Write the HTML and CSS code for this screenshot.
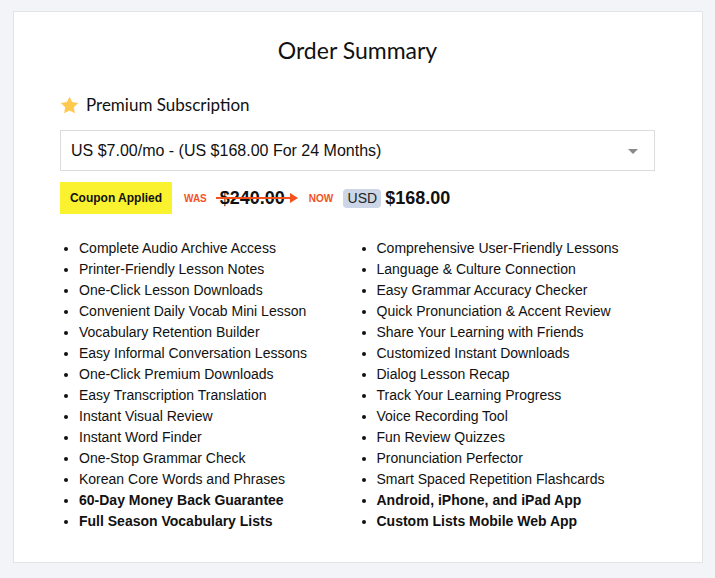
FILE: index.html
```html
<!DOCTYPE html>
<html>
<head>
<meta charset="utf-8">
<link rel="stylesheet" href="styles.css">
</head>
<body>
<div class="card">
  <h1 class="title">Order Summary</h1>
  <div class="plan">
    <svg class="star" width="19" height="18" viewBox="0 0 24 23"><path d="M12 0.8l3.4 7 7.7 1.1-5.6 5.4 1.3 7.7L12 18.4l-6.8 3.6 1.3-7.7L0.9 8.9l7.7-1.1z" fill="#ffc94d"/></svg>
    <span>Premium Subscription</span>
  </div>
  <div class="select">
    <span>US $7.00/mo - (US $168.00 For 24 Months)</span>
    <span class="caret"></span>
  </div>
  <div class="price-row">
    <div class="coupon">Coupon Applied</div>
    <span class="tag was">WAS</span>
    <span class="old">$240.00<span class="arrow"><span class="arrow-line"></span><span class="arrow-head"></span></span></span>
    <span class="tag now">NOW</span>
    <span class="usd">USD</span>
    <span class="new">$168.00</span>
  </div>
  <div class="features">
    <ul>
      <li>Complete Audio Archive Access</li>
      <li>Printer-Friendly Lesson Notes</li>
      <li>One-Click Lesson Downloads</li>
      <li>Convenient Daily Vocab Mini Lesson</li>
      <li>Vocabulary Retention Builder</li>
      <li>Easy Informal Conversation Lessons</li>
      <li>One-Click Premium Downloads</li>
      <li>Easy Transcription Translation</li>
      <li>Instant Visual Review</li>
      <li>Instant Word Finder</li>
      <li>One-Stop Grammar Check</li>
      <li>Korean Core Words and Phrases</li>
      <li class="b">60-Day Money Back Guarantee</li>
      <li class="b">Full Season Vocabulary Lists</li>
    </ul>
    <ul>
      <li>Comprehensive User-Friendly Lessons</li>
      <li>Language &amp; Culture Connection</li>
      <li>Easy Grammar Accuracy Checker</li>
      <li>Quick Pronunciation &amp; Accent Review</li>
      <li>Share Your Learning with Friends</li>
      <li>Customized Instant Downloads</li>
      <li>Dialog Lesson Recap</li>
      <li>Track Your Learning Progress</li>
      <li>Voice Recording Tool</li>
      <li>Fun Review Quizzes</li>
      <li>Pronunciation Perfector</li>
      <li>Smart Spaced Repetition Flashcards</li>
      <li class="b">Android, iPhone, and iPad App</li>
      <li class="b">Custom Lists Mobile Web App</li>
    </ul>
  </div>
</div>
</body>
</html>
```
FILE: styles.css
```css
html, body {
  margin: 0;
  padding: 0;
  background: #f3f4f7;
}
body {
  padding: 11px 12px 0 13px;
  font-family: "Liberation Sans", Arial, sans-serif;
  color: #111;
}
.card {
  box-sizing: border-box;
  width: 690px;
  height: 552px;
  background: #fff;
  border: 1px solid #e2e3e6;
  padding: 23px 47px 0 46px;
}
.title {
  margin: 0;
  text-align: center;
  font-family: Lato, "Open Sans", sans-serif;
  font-weight: 400;
  font-size: 23px;
  line-height: 30px;
  color: #111;
}
.plan {
  display: flex;
  align-items: center;
  gap: 7px;
  margin-top: 29px;
  font-family: Lato, "Open Sans", sans-serif;
  font-size: 17px;
  line-height: 22px;
  color: #111;
}
.star { display: block; }
.select {
  box-sizing: border-box;
  margin-top: 14px;
  height: 41px;
  border: 1px solid #dcdcdf;
  display: flex;
  align-items: center;
  justify-content: space-between;
  padding: 0 16px 0 10px;
  font-size: 16px;
  color: #111;
}
.caret {
  width: 0;
  height: 0;
  border-left: 5px solid transparent;
  border-right: 5px solid transparent;
  border-top: 5px solid #8a8a8e;
  margin-top: 1px;
}
.price-row {
  display: flex;
  align-items: center;
  margin-top: 11px;
  height: 32px;
}
.coupon {
  background: #faf22f;
  width: 112px;
  height: 32px;
  display: flex;
  align-items: center;
  justify-content: center;
  font-weight: 700;
  font-size: 12px;
  color: #111;
}
.tag {
  font-weight: 700;
  font-size: 10px;
  color: #f4511e;
}
.was { margin-left: 12px; }
.old {
  position: relative;
  margin-left: 13px;
  font-weight: 700;
  font-size: 18px;
  color: #111;
}
.arrow {
  position: absolute;
  left: -4px;
  top: 50%;
  width: 82px;
  height: 10px;
  margin-top: -5px;
  display: flex;
  align-items: center;
}
.arrow-line {
  flex: 1;
  height: 2px;
  background: #f4511e;
}
.arrow-head {
  width: 0;
  height: 0;
  border-top: 5px solid transparent;
  border-bottom: 5px solid transparent;
  border-left: 8px solid #f4511e;
}
.now { margin-left: 24px; }
.usd {
  margin-left: 10px;
  background: #ccd6e6;
  border-radius: 4px;
  width: 38px;
  height: 19px;
  display: flex;
  align-items: center;
  justify-content: center;
  font-size: 14px;
  color: #222;
}
.new {
  margin-left: 4px;
  font-weight: 700;
  font-size: 18px;
  color: #111;
}
.features {
  display: grid;
  grid-template-columns: 1fr 1fr;
  margin-top: 24px;
}
.features ul {
  margin: 0;
  padding: 0 0 0 19px;
  list-style: disc;
}
.features li {
  font-size: 14px;
  line-height: 21px;
  color: #111;
}
.features li.b { font-weight: 700; }
```
